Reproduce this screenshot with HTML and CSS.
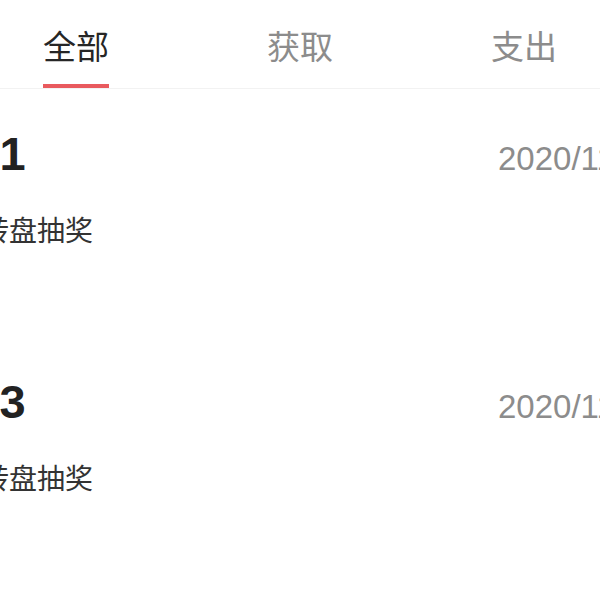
FILE: index.html
```html
<!DOCTYPE html>
<html lang="zh-CN">
    <head>
        <meta charset="UTF-8" />
        <meta name="viewport" content="width=device-width, initial-scale=1.0" />
        <title>积分明细</title>
        <link rel="stylesheet" href="styles.css">
    </head>
    <body>
        <div class="page">
            <div class="tabs">
                <div class="tab active"><span class="tab-label">全部</span></div>
                <div class="tab"><span class="tab-label">获取</span></div>
                <div class="tab"><span class="tab-label">支出</span></div>
            </div>

            <ul class="record-list">
                <li class="record">
                    <div class="record-head">
                        <span class="record-amount">+1</span>
                        <span class="record-date">2020/11/26 10:32</span>
                    </div>
                    <div class="record-title">转盘抽奖</div>
                </li>
                <li class="record">
                    <div class="record-head">
                        <span class="record-amount">+3</span>
                        <span class="record-date">2020/11/25 18:07</span>
                    </div>
                    <div class="record-title">转盘抽奖</div>
                </li>
            </ul>
        </div>
    </body>
</html>
```

FILE: styles.css
```css
* {
    box-sizing: border-box;
}

html,
body {
    margin: 0;
    height: 100%;
    overflow: hidden;
    background: #fff;
}

body {
    font-family: "Liberation Sans", "Noto Sans CJK SC", sans-serif;
    color: #333;
}

.page {
    width: 672px;
    margin-left: -36px;
}

.tabs {
    display: flex;
    height: 89px;
    border-bottom: 1px solid #f2f2f2;
}

.tab {
    flex: 1;
    display: flex;
    justify-content: center;
}

.tab-label {
    display: flex;
    align-items: center;
    height: 88px;
    padding-top: 2px;
    font-family: "Noto Sans CJK SC", sans-serif;
    font-size: 33px;
    color: #8c8c8c;
    border-bottom: 4px solid transparent;
    border-top: 4px solid transparent;
}

.tab.active .tab-label {
    color: #262626;
    border-bottom-color: #e95a5e;
}

.record-list {
    list-style: none;
    margin: 0;
    padding: 0;
}

.record {
    height: 248px;
    padding-top: 42px;
}

.record-head {
    display: grid;
    grid-template-columns: 534px auto;
    align-items: baseline;
}

.record-amount {
    margin-left: 8px;
    font-size: 47px;
    line-height: 46px;
    font-weight: bold;
    color: #222;
}

.record-date {
    font-size: 33px;
    line-height: 33px;
    color: #8c8c8c;
    white-space: nowrap;
}

.record-title {
    margin: 38px 0 0 17px;
    font-family: "Noto Sans CJK SC", sans-serif;
    font-size: 28px;
    line-height: 28px;
    color: #333;
}
```
